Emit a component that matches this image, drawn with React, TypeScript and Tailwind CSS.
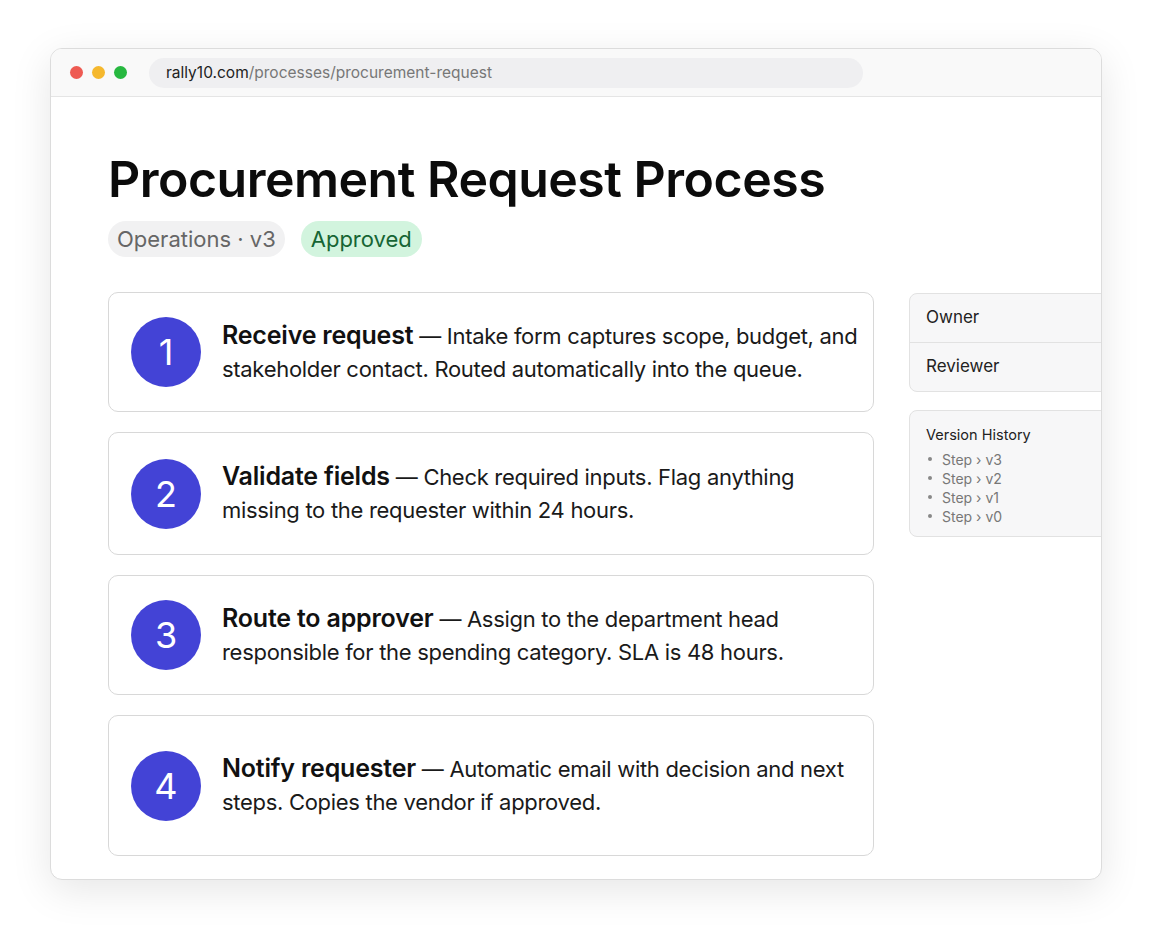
import React from "react";

const steps = [
  { n: "1", t: "Receive request", d: "Intake form captures scope, budget, and stakeholder contact. Routed automatically into the queue.", h: "h-[120px]" },
  { n: "2", t: "Validate fields", d: "Check required inputs. Flag anything missing to the requester within 24 hours.", h: "h-[123px]" },
  { n: "3", t: "Route to approver", d: "Assign to the department head responsible for the spending category. SLA is 48 hours.", h: "h-[120px]" },
  { n: "4", t: "Notify requester", d: "Automatic email with decision and next steps. Copies the vendor if approved.", h: "h-[141px]" },
];

export default function App() {
  return (
    <div className="w-[1152px] h-[928px] bg-white pt-[48px] pl-[50px]" style={{ fontFamily: "Inter, 'Noto Sans', sans-serif" }}>
      <div className="w-[1052px] h-[832px] rounded-[12px] border border-[#dcdcdc] bg-white overflow-hidden shadow-[0_10px_40px_rgba(0,0,0,0.10)]">
        <div className="h-[48px] bg-[#f9f9f9] border-b border-[#e5e5e5] flex items-center pl-[19px]">
          <div className="flex gap-[9px]">
            <span className="w-[13px] h-[13px] rounded-full bg-[#ee5a52]" />
            <span className="w-[13px] h-[13px] rounded-full bg-[#f5b82e]" />
            <span className="w-[13px] h-[13px] rounded-full bg-[#27b840]" />
          </div>
          <div className="ml-[22px] w-[714px] h-[30px] rounded-full bg-[#efeff1] flex items-center px-[17px] text-[15.5px] text-[#222]">
            rally10.com<span className="text-[#777]">/processes/procurement-request</span>
          </div>
        </div>
        <div className="pl-[57px] pt-[52px] flex">
          <div className="w-[766px] shrink-0">
            <h1 className="text-[50px] leading-[60px] font-semibold text-[#0b0b0b] tracking-[-0.5px]">Procurement Request Process</h1>
            <div className="flex gap-[16px] mt-[12px]">
              <span className="h-[36px] px-[9px] rounded-full bg-[#f1f1f2] text-[22px] text-[#666] flex items-center">Operations · v3</span>
              <span className="h-[36px] px-[10px] rounded-full bg-[#d2f4de] text-[22px] text-[#166534] flex items-center">Approved</span>
            </div>
            <div className="mt-[35px] flex flex-col gap-[20px]">
              {steps.map((s) => (
                <div key={s.n} className={`${s.h} rounded-[10px] border border-[#d8d8d8] flex items-center pl-[22px] pr-[6px]`}>
                  <div className="w-[70px] h-[70px] shrink-0 rounded-full bg-[#4343d6] text-white text-[36px] flex items-center justify-center">{s.n}</div>
                  <p className="ml-[21px] text-[22px] leading-[33px] text-[#1a1a1a] tracking-[-0.3px]">
                    <b className="font-semibold text-[25px] text-[#111] tracking-[-0.2px]">{s.t}</b> — {s.d}
                  </p>
                </div>
              ))}
            </div>
          </div>
          <div className="ml-[35px] mt-[144px] w-[240px] shrink-0 flex flex-col gap-[18px]">
            <div className="rounded-[8px] border border-[#e2e2e2] bg-[#f7f7f8] text-[17px] text-[#222]">
              <div className="h-[49px] flex items-center px-[16px] border-b border-[#e2e2e2]">Owner</div>
              <div className="h-[48px] flex items-center px-[16px]">Reviewer</div>
            </div>
            <div className="rounded-[8px] border border-[#e2e2e2] bg-[#f7f7f8] px-[16px] pt-[13px] pb-[10px]">
              <div className="text-[14.5px] text-[#222] mb-[4px]">Version History</div>
              {["v3", "v2", "v1", "v0"].map((v) => (
                <div key={v} className="text-[14px] leading-[19px] text-[#777] flex items-center">
                  <span className="w-[4px] h-[4px] rounded-full bg-[#888] mr-[10px] ml-[2px]" />Step › {v}
                </div>
              ))}
            </div>
          </div>
        </div>
      </div>
    </div>
  );
}
